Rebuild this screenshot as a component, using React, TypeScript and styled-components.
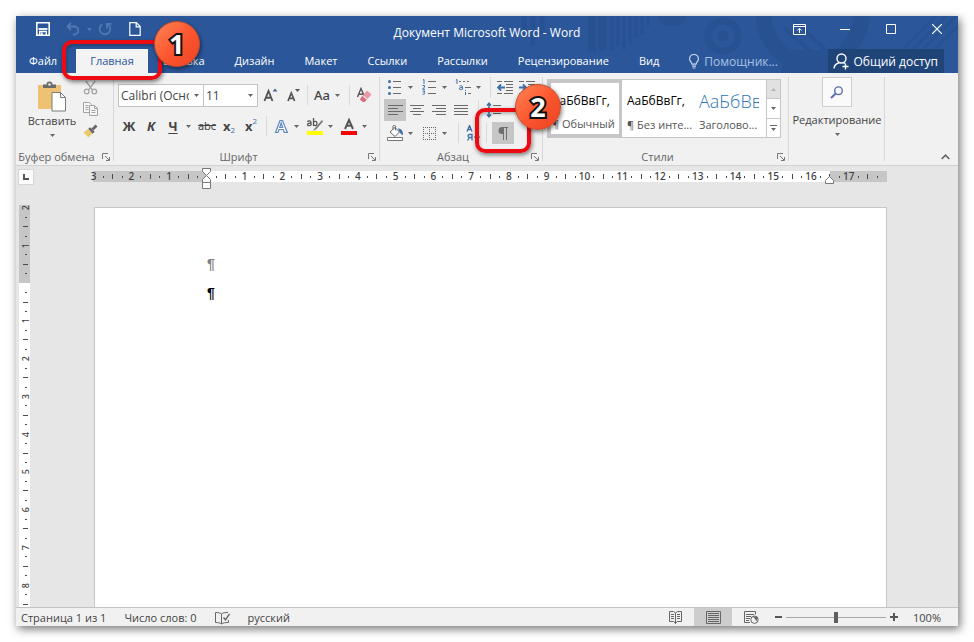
import React from "react";
import type { ReactNode } from "react";
import styled, { createGlobalStyle, css } from "styled-components";

const blue = "#2b579a";
const ink = "#444444";
const iconGrey = "#6a6a6a";
const iconBlue = "#3c6fa8";

const GlobalStyle = createGlobalStyle`
  *, *::before, *::after { box-sizing: border-box; }
  body { margin: 0; background: #ffffff; }
  body, button, input, select { font-family: "Open Sans", "Noto Sans", sans-serif; font-size: 11px; }
  button { border: 0; padding: 0; margin: 0; background: transparent; color: inherit; }
  svg { display: block; flex: none; }
`;

const Desktop = styled.div`
  height: 100vh;
  padding: 16px;
  display: flex;
`;

const Window = styled.div`
  flex: 1;
  min-width: 0;
  display: flex;
  flex-direction: column;
  background: #e6e6e6;
  color: ${ink};
  box-shadow: 2px 3px 9px rgba(0, 0, 0, 0.55);
`;

/* ---------- Header ---------- */

const Header = styled.header`
  position: relative;
  z-index: 2;
  background: ${blue};
  color: #ffffff;
`;

const Decoration = styled.svg`
  position: absolute;
  right: 0;
  top: 0;
`;

const TitleBar = styled.div`
  position: relative;
  display: grid;
  grid-template-columns: 1fr auto 1fr;
  height: 32px;
`;

const QuickAccess = styled.div`
  display: flex;
  align-items: center;
  height: 26px;
  padding-left: 16px;
`;

const QuickButton = styled.button<{ $dim?: boolean; $narrow?: boolean; $gap?: boolean }>`
  width: ${(p) => (p.$narrow ? 10 : 22)}px;
  height: 22px;
  margin-left: ${(p) => (p.$gap ? 8 : 0)}px;
  display: flex;
  align-items: center;
  justify-content: center;
  color: ${(p) => (p.$dim ? "#5078b4" : "#ffffff")};
`;

const WindowTitle = styled.h1`
  margin: 0;
  padding-top: 1px;
  font-size: 12px;
  font-weight: 400;
  line-height: 32px;
  white-space: nowrap;
`;

const WindowControls = styled.div`
  display: flex;
  justify-content: flex-end;
  gap: 4px;
`;

const WindowButton = styled.button`
  width: 42px;
  height: 26px;
  display: flex;
  align-items: center;
  justify-content: center;
`;

const TabBar = styled.nav`
  position: relative;
  display: flex;
  align-items: flex-end;
  height: 25px;
`;

const TabSlot = styled.div<{ $first?: boolean }>`
  position: relative;
  margin-right: ${(p) => (p.$first ? 4 : 0)}px;
`;

const Tab = styled.button<{ $active?: boolean; $first?: boolean }>`
  height: 24px;
  padding: 0 ${(p) => (p.$active ? 14 : 15)}px 0 ${(p) => (p.$first ? 13 : p.$active ? 14 : 15)}px;
  line-height: 24px;
  white-space: nowrap;
  ${(p) =>
    p.$active &&
    css`
      background: #f3f3f3;
      color: ${blue};
    `}
`;

const Assistant = styled.label`
  display: flex;
  align-items: center;
  gap: 4px;
  height: 24px;
  margin-left: 14px;
`;

const AssistantInput = styled.input`
  width: 84px;
  padding: 0;
  border: 0;
  outline: 0;
  background: transparent;
  font-size: 12px;
  color: #ffffff;
  &::placeholder { color: #a9c1e4; opacity: 1; }
`;

const ShareButton = styled.button`
  display: flex;
  align-items: center;
  gap: 3px;
  height: 24px;
  margin: 0 14px 0 auto;
  padding: 0 6px 0 5px;
  background: #1e4478;
  font-size: 12px;
  white-space: nowrap;
`;

/* ---------- Callouts ---------- */

const CalloutFrame = styled.span<{ $side: number; $top: number; $bottom: number }>`
  position: absolute;
  z-index: 3;
  left: -${(p) => p.$side}px;
  right: -${(p) => p.$side}px;
  top: -${(p) => p.$top}px;
  bottom: -${(p) => p.$bottom}px;
  border: 4px solid #ee0a12;
  border-radius: 10px;
  box-shadow: 1px 2px 4px rgba(0, 0, 0, 0.5), inset 1px 2px 3px rgba(0, 0, 0, 0.25);
  pointer-events: none;
`;

const CalloutBadge = styled.span<{ $right: number; $top: number }>`
  position: absolute;
  right: -${(p) => p.$right}px;
  top: -${(p) => p.$top}px;
  width: 46px;
  height: 46px;
  border-radius: 50%;
  border: 1px solid #c4492a;
  background: linear-gradient(135deg, #ff8152 5%, #fc5730 50%, #ee4524 95%);
  box-shadow: 1px 2px 4px rgba(0, 0, 0, 0.5);
  color: #ffffff;
  font: 700 27px/43px "Noto Sans", sans-serif;
  text-align: center;
  -webkit-text-stroke: 4px #111111;
  paint-order: stroke fill;
`;

/* ---------- Ribbon ---------- */

const Ribbon = styled.div`
  display: flex;
  height: 93px;
  background: #f1f1f1;
  border-bottom: 1px solid #d2d2d2;
`;

const Group = styled.section<{ $basis: number }>`
  position: relative;
  flex: 0 0 ${(p) => p.$basis}px;
  display: flex;
  flex-direction: column;
  &::after {
    content: "";
    position: absolute;
    right: 0;
    top: 4px;
    bottom: 4px;
    width: 1px;
    background: #d8d8d8;
  }
`;

const GroupBody = styled.div`
  flex: 1;
  min-height: 0;
  display: flex;
`;

const GroupFooter = styled.div`
  display: flex;
  align-items: center;
  height: 17px;
  color: #666666;
`;

const GroupLabel = styled.span`
  flex: 1;
  text-align: center;
  white-space: nowrap;
`;

const Launcher = styled.button`
  width: 17px;
  height: 16px;
  display: flex;
  align-items: center;
  justify-content: center;
`;

const PasteButton = styled.button`
  display: flex;
  flex-direction: column;
  align-items: center;
  width: 54px;
  height: 60px;
  margin: 8px 0 0 9px;
`;

const PasteLabel = styled.span`
  line-height: 16px;
  margin-bottom: 5px;
`;

const SmallStack = styled.div`
  display: flex;
  flex-direction: column;
  padding-top: 3px;
`;

const ToolRows = styled.div<{ $top: number; $left: number; $gap: number }>`
  display: flex;
  flex-direction: column;
  gap: ${(p) => p.$gap}px;
  padding: ${(p) => p.$top}px 0 0 ${(p) => p.$left}px;
`;

const ToolRow = styled.div`
  display: flex;
  align-items: center;
  height: 22px;
`;

const ToolButton = styled.button<{ $active?: boolean }>`
  width: 22px;
  height: 22px;
  display: flex;
  align-items: center;
  justify-content: center;
  background: ${(p) => (p.$active ? "#c6c6c6" : "transparent")};
`;

const CaretButton = styled.button`
  width: 12px;
  height: 22px;
  padding-right: 3px;
  display: flex;
  align-items: center;
  justify-content: center;
`;

const Letter = styled.span<{ $italic?: boolean; $underline?: boolean; $strike?: boolean; $light?: boolean }>`
  font-family: "Noto Sans", sans-serif;
  font-size: ${(p) => (p.$strike ? 11 : 13)}px;
  line-height: 18px;
  font-weight: ${(p) => (p.$light ? 500 : p.$strike ? 400 : 700)};
  font-style: ${(p) => (p.$italic ? "italic" : "normal")};
  text-decoration: ${(p) => (p.$underline ? "underline" : p.$strike ? "line-through" : "none")};
  text-underline-offset: 2px;
  white-space: nowrap;
`;

const Index = styled.span<{ $up?: boolean }>`
  align-self: ${(p) => (p.$up ? "flex-start" : "flex-end")};
  color: ${iconBlue};
  font-size: 8px;
  line-height: 10px;
  padding: 1px 0 2px;
`;

const Divider = styled.span<{ $before?: number; $after?: number }>`
  width: 1px;
  height: 20px;
  margin: 0 ${(p) => p.$after ?? 3}px 0 ${(p) => p.$before ?? 4}px;
  background: #dadada;
`;

const Field = styled.span<{ $width: number }>`
  position: relative;
  display: flex;
  width: ${(p) => p.$width}px;
  height: 23px;
  margin-right: -1px;
  svg { position: absolute; right: 5px; top: 10px; pointer-events: none; }
`;

const FieldSelect = styled.select`
  appearance: none;
  width: 100%;
  padding: 0 14px 0 2px;
  border: 1px solid #c3c3c3;
  border-radius: 0;
  background: #ffffff;
  color: ${ink};
  font-size: 12px;
  text-overflow: clip;
`;

const PilcrowSlot = styled.span`
  position: relative;
  display: flex;
`;

const FieldGap = styled.span`
  width: 3px;
`;

/* ---------- Styles gallery ---------- */

const Gallery = styled.div`
  flex: 1;
  display: flex;
  height: 59px;
  margin: 6px 8px 0 4px;
  border: 1px solid #c6c6c6;
  background: #ffffff;
`;

const StyleCard = styled.button<{ $active?: boolean }>`
  flex: 1;
  min-width: 0;
  display: flex;
  flex-direction: column;
  padding: ${(p) => (p.$active ? 0 : 3)}px 2px 0 ${(p) => (p.$active ? 1 : 5)}px;
  border: ${(p) => (p.$active ? "3px solid #c6c6c6" : "0")};
  overflow: hidden;
  text-align: left;
  white-space: nowrap;
`;

const StylePreview = styled.span<{ $heading?: boolean }>`
  height: 32px;
  line-height: 36px;
  max-width: 60px;
  overflow: hidden;
  color: ${(p) => (p.$heading ? "#2e74b5" : "#000000")};
  font-size: ${(p) => (p.$heading ? 18 : 12)}px;
  font-weight: ${(p) => (p.$heading ? 300 : 400)};
`;

const StyleName = styled.span`
  font-size: 11px;
  line-height: 20px;
  color: #555555;
`;

const GalleryScroll = styled.div`
  width: 14px;
  display: flex;
  flex-direction: column;
  border-left: 1px solid #c6c6c6;
`;

const ScrollButton = styled.button<{ $disabled?: boolean }>`
  flex: 1;
  display: flex;
  align-items: center;
  justify-content: center;
  background: ${(p) => (p.$disabled ? "#e1e1e1" : "#ffffff")};
  color: ${(p) => (p.$disabled ? "#b5b5b5" : iconGrey)};
  & + & { border-top: 1px solid #c6c6c6; }
`;

const EditingButton = styled.button`
  flex: 1;
  display: flex;
  flex-direction: column;
  align-items: center;
  padding-top: 4px;
  line-height: 26px;
`;

const EditingIcon = styled.span`
  width: 30px;
  height: 30px;
  display: flex;
  align-items: center;
  justify-content: center;
  background: #fafafa;
  border: 1px solid #cfcfcf;
`;

const CollapseButton = styled.button`
  align-self: flex-end;
  margin: 0 6px 1px auto;
  width: 14px;
  height: 14px;
  display: flex;
  align-items: center;
  justify-content: center;
`;

/* ---------- Rulers and page ---------- */

const RulerRow = styled.div`
  display: flex;
  align-items: flex-start;
  height: 39px;
  padding: 3px 71px 0 2px;
`;

const TabSelector = styled.button`
  width: 16px;
  height: 16px;
  margin-right: 59px;
  display: flex;
  align-items: center;
  justify-content: center;
  background: #fdfdfd;
  border: 1px solid #d6d6d6;
`;

const HorizontalRuler = styled.div`
  position: relative;
  flex: 1;
  min-width: 0;
  height: 11px;
  margin-top: 2px;
  background: linear-gradient(to right, #c6c6c6 14.4%, #ffffff 14.4%, #ffffff 92.8%, #c6c6c6 92.8%);
`;

const HorizontalScale = styled.div`
  display: flex;
  align-items: center;
  height: 11px;
  margin: 0 5px 0 -4px;
`;

const VerticalRuler = styled.div`
  width: 11px;
  margin-left: 3px;
  padding-left: 2px;
  display: flex;
  overflow: hidden;
  background: linear-gradient(to bottom, #c6c6c6 78px, #ffffff 78px);
`;

const VerticalScale = styled.div`
  flex: 1;
  display: flex;
  flex-direction: column;
  margin: -2px 0;
`;

const Cell = styled.span`
  flex: 1 1 0;
  min-width: 0;
  min-height: 0;
  display: flex;
  align-items: center;
  justify-content: center;
  font: 500 10px/11px "Noto Sans", sans-serif;
  color: #3c3c3c;
`;

const Mark = styled.i<{ $long?: boolean; $vertical?: boolean }>`
  flex: none;
  width: ${(p) => (p.$vertical ? (p.$long ? 5 : 2) : 1)}px;
  height: ${(p) => (p.$vertical ? 1 : p.$long ? 5 : 2)}px;
  background: #4a4a4a;
`;

const TurnedNumber = styled.span`
  writing-mode: vertical-rl;
  transform: rotate(180deg);
  font-size: 9px;
  line-height: 9px;
`;

const IndentMarker = styled.svg<{ $at: string; $top: number }>`
  position: absolute;
  left: ${(p) => p.$at};
  top: ${(p) => p.$top}px;
  margin-left: -5px;
`;

const Workspace = styled.main`
  flex: 1;
  min-height: 0;
  display: flex;
`;

const Canvas = styled.div`
  flex: 1;
  min-width: 0;
  display: flex;
  padding: 2px 71px 0 64px;
`;

const Page = styled.article`
  flex: 1;
  padding: 46px 112px 0;
  background: #ffffff;
  border: 1px solid #c6c6c6;
  border-bottom: 0;
`;

const Paragraph = styled.p<{ $muted?: boolean }>`
  margin: 0 0 9px;
  color: ${(p) => (p.$muted ? "#7f7f7f" : "#000000")};
  font: 700 14px/20px "Liberation Sans", sans-serif;
`;

/* ---------- Status bar ---------- */

const StatusBar = styled.footer`
  display: flex;
  align-items: center;
  height: 19px;
  padding: 0 17px 0 5px;
  background: #f1f1f1;
  border-top: 1px solid #c3c3c3;
  white-space: nowrap;
`;

const StatusButton = styled.button`
  margin-right: 18px;
  padding-top: 2px;
  line-height: 16px;
`;

const ViewButton = styled.button<{ $active?: boolean }>`
  width: 38px;
  height: 18px;
  display: flex;
  align-items: center;
  justify-content: center;
  background: ${(p) => (p.$active ? "#cdcdcd" : "transparent")};
`;

const Spacer = styled.span`
  flex: 1;
`;

const ZoomButton = styled.button`
  width: 16px;
  height: 18px;
  display: flex;
  align-items: center;
  justify-content: center;
`;

const ZoomSlider = styled.input`
  appearance: none;
  width: 100px;
  height: 11px;
  margin: 0;
  background: linear-gradient(#a8a8a8, #a8a8a8) center / 100% 1px no-repeat;
  &::-webkit-slider-thumb {
    appearance: none;
    width: 4px;
    height: 11px;
    background: #5f5f5f;
  }
`;

const ZoomValue = styled.button`
  margin-left: 11px;
  padding-top: 2px;
  line-height: 16px;
`;

/* ---------- Icons ---------- */

const Caret = () => (
  <svg width="5" height="3" viewBox="0 0 5 3" aria-hidden="true">
    <path d="M0 0h5L2.5 3z" fill="#666" />
  </svg>
);

const Lines = ({ rows }: { rows: [number, number][] }) => (
  <svg width="16" height="16" viewBox="0 0 16 16" aria-hidden="true">
    {rows.map(([x, w], i) => (
      <path key={i} d={`M${x} ${3.5 + i * 3}h${w}`} stroke={iconGrey} />
    ))}
  </svg>
);

const SaveIcon = () => (
  <svg width="14" height="14" viewBox="0 0 14 14" fill="none" stroke="currentColor" aria-hidden="true">
    <path d="M.8.8h12.4v12.4H.8z" strokeWidth="1.6" />
    <path d="M2.500 7h9" strokeWidth="1.8" />
    <path d="M3.700 13V9.500h6.600V13" strokeWidth="1.4" />
    <path d="M5.800 10.500v3" strokeWidth="1.800" />
  </svg>
);
const UndoIcon = () => (
  <svg width="14" height="14" viewBox="0 0 14 14" fill="none" stroke="currentColor" strokeWidth="1.8" aria-hidden="true">
    <path d="M5 1 1.5 4.5 5 8M1.8 4.5h6.4a4 4 0 0 1 0 8H7" />
  </svg>
);
const RedoIcon = () => (
  <svg width="14" height="14" viewBox="0 0 14 14" fill="none" stroke="currentColor" strokeWidth="1.8" aria-hidden="true">
    <path d="M4.3 2.4a5.3 5.3 0 1 0 5.6.2M9 6.5V1.8h4.5" />
  </svg>
);
const NewIcon = () => (
  <svg width="12" height="14" viewBox="0 0 12 14" fill="none" stroke="currentColor" strokeWidth="1.2" aria-hidden="true">
    <path d="M.8.7h6.6l3.8 3.8v8.8H.8zM7.2.8v4h4" />
  </svg>
);
const RibbonOptionsIcon = () => (
  <svg width="13" height="11" viewBox="0 0 13 11" fill="none" stroke="currentColor" aria-hidden="true">
    <path d="M.5.5h12v10H.5zM.5 2.5h12M6.5 9V4.5M4.3 6.5l2.2-2.2 2.2 2.2" />
  </svg>
);
const BulbIcon = () => (
  <svg width="12" height="15" viewBox="0 0 12 15" fill="none" stroke="#c8d8ef" strokeWidth="1.2" aria-hidden="true">
    <path d="M3.9 10.2c0-2-2.3-2.6-2.3-5.3a4.4 4.4 0 0 1 8.8 0c0 2.7-2.3 3.3-2.3 5.3zM4 12.2h4M4.6 14h2.8" />
  </svg>
);
const ShareIcon = () => (
  <svg width="17" height="17" viewBox="0 0 17 17" fill="none" stroke="currentColor" strokeWidth="1.4" aria-hidden="true">
    <circle cx="8.5" cy="5.5" r="4.5" />
    <path d="M1 15.5c.3-3.2 2.4-5 5.2-5.700M10.500 9.500l1.500 1M12.500 10.500v6M9.500 13.500h6" />
  </svg>
);
const LauncherIcon = () => (
  <svg width="8" height="8" viewBox="0 0 8 8" fill="none" stroke="#777" aria-hidden="true">
    <path d="M.5 6V.5H6M3 3l4 4M7.500 4v3.500H4" />
  </svg>
);
const PasteIcon = () => (
  <svg width="30" height="32" viewBox="0 0 30 32" aria-hidden="true">
    <path d="M1 4h23v24H1z" fill="#eec274" />
    <path d="M6 7V3.500h3.500a3 3 0 0 1 6 0H19V7z" fill="#6b6b6b" />
    <circle cx="12.500" cy="3.500" r="1.200" fill="#f1f1f1" />
    <path d="M15 11.500h8.500l5 5V30H15z" fill="#fff" stroke="#7a7a7a" />
    <path d="M23.500 11.500v5h5" fill="none" stroke="#7a7a7a" />
  </svg>
);
const CutIcon = () => (
  <svg width="15" height="15" viewBox="0 0 15 15" fill="none" stroke="#a3a3a3" strokeWidth="1.300" aria-hidden="true">
    <path d="M2.800 1 9.500 10M12.200 1 5.500 10" />
    <circle cx="3.700" cy="11.500" r="2.300" />
    <circle cx="11.300" cy="11.500" r="2.300" />
  </svg>
);
const CopyIcon = () => (
  <svg width="15" height="14" viewBox="0 0 15 14" fill="#f6f6f6" stroke="#a3a3a3" aria-hidden="true">
    <path d="M.5.500h6l2 2v8h-8z" />
    <path d="M2.500 3.500h3M2.500 5.500h3M2.500 7.500h3" />
    <path d="M6.500 3.500h5l3 3v7h-8zM11.500 3.500v3h3M8.500 8.500h4M8.500 10.500h4" />
  </svg>
);
const BrushIcon = () => (
  <svg width="15" height="14" viewBox="0 0 15 14" aria-hidden="true">
    <path d="M5 5 .5 8.500 5.500 13.500 9.500 9.500z" fill="#e8c96a" />
    <path d="m5.200 4.800 2-1.500 4.500 4.500-2 2z" fill="#666" />
    <path d="m8.500 4.500 4-4 2 2-4 4z" fill="#666" />
  </svg>
);
const GrowIcon = ({ shrink }: { shrink?: boolean }) => (
  <svg width="16" height="16" viewBox="0 0 16 16" aria-hidden="true">
    {shrink ? (
      <path d="m3 14 3.300-8 3.300 8M4.200 11.300h4.300" fill="none" stroke="#555" strokeWidth="1.700" />
    ) : (
      <path d="m1.500 14 4-10 4 10M3 10.800h5" fill="none" stroke="#555" strokeWidth="1.900" />
    )}
    <path d={shrink ? "M10 2h5l-2.500 3z" : "M9.500 4.500h5L12 1.500z"} fill={shrink ? "#555" : "#4a6796"} />
  </svg>
);
const EraserIcon = () => (
  <svg width="17" height="17" viewBox="0 0 17 17" aria-hidden="true">
    <path d="M1.500 10 5 1.500 8 8.500M3 7.200h4" fill="none" stroke="#555" strokeWidth="1.400" />
    <path d="m11 3.500 4.500 4-4 4.500-4.500-4z" fill="#e79aa6" />
    <path d="m6.300 8.800 4.500 4-2 2.200h-2l-3-2.600z" fill="#d8707f" />
  </svg>
);
const TextEffectIcon = () => (
  <svg width="15" height="15" viewBox="0 0 15 15" aria-hidden="true">
    <path d="M1.500 13.500 6 1.500h2.500l4.800 12h-3l-1-3H5l-1 3zM5.700 8.500h3L7.200 4z" fill="#fff" stroke="#5f86bd" strokeWidth="1.200" />
  </svg>
);
const HighlightIcon = () => (
  <svg width="18" height="18" viewBox="0 0 18 18" aria-hidden="true">
    <path d="M1 14h16v4H1z" fill="#ffff00" />
    <path d="M5 8.500V5.200C5 3.200 1.800 3.600 1.500 4.800M5 6.200c-2-.2-3.500.3-3.500 1.400 0 1.500 2.800 1.500 3.500-.2M7.500 1v8M7.500 5.500c.8-1.700 3.500-1.500 3.500 1s-2.700 2.600-3.500.8" fill="none" stroke="#555" strokeWidth="1.300" />
    <path d="m16 3-7 8-2 2.500 3-1 7-8z" fill="#777" />
  </svg>
);
const FontColorIcon = () => (
  <svg width="16" height="18" viewBox="0 0 16 18" aria-hidden="true">
    <path d="M0 14h16v4H0z" fill="#f00808" />
    <path d="m4 12 4-9 4 9M5.500 8.800h5" fill="none" stroke="#555" strokeWidth="2" />
  </svg>
);
const BulletsIcon = () => (
  <svg width="14" height="15" viewBox="0 0 14 15" aria-hidden="true">
    {[1.5, 7.5, 13.5].map((y) => (
      <g key={y}>
        <circle cx="1.500" cy={y} r="1.500" fill={iconBlue} />
        <path d={`M5 ${y}h8`} stroke={iconGrey} />
      </g>
    ))}
  </svg>
);
const NumbersIcon = () => (
  <svg width="15" height="16" viewBox="0 0 15 16" fill="none" aria-hidden="true">
    <path d="M1 1l1-.5V5M.5 6.500h2v1.500L.5 10.200h2.500M.5 12h2.300l-1 1.600c2 0 1 2-1.300 1.700" stroke={iconBlue} />
    <path d="M6 2.500h8M6 8.500h8M6 14.500h8" stroke={iconGrey} />
  </svg>
);
const MultiIcon = () => (
  <svg width="17" height="17" viewBox="0 0 17 17" fill="none" aria-hidden="true">
    <path d="M.8 1 2 .5V5M4.500 7c2-.8 3 0 3 1.200v2.300M7.500 8.500c-4-.3-4 2.300-1.800 2.200 1 0 1.800-.8 1.800-1.400M10.500 13v3M10.500 11v1" stroke={iconBlue} />
    <path d="M4 2.500h2M8 2.500h2M12 2.500h2M10 8.500h6M13 14.500h3" stroke={iconGrey} />
  </svg>
);
const IndentIcon = ({ right }: { right?: boolean }) => (
  <svg width="16" height="13" viewBox="0 0 16 13" fill="none" aria-hidden="true">
    <path d="M0 .5h5M7 .5h9M9 3.500h7M9 6.500h7M9 9.500h7M0 12.500h5M7 12.500h9" stroke={iconGrey} />
    <path d={right ? "M0 6.500h7M4 3.500l3 3-3 3" : "M1 6.500h7M4 3.500l-3 3 3 3"} stroke={iconBlue} strokeWidth="1.800" />
  </svg>
);
const SpacingIcon = () => (
  <svg width="15" height="16" viewBox="0 0 15 16" fill="none" aria-hidden="true">
    <path d="M3 1v5M1 3.500 3 1.200l2 2.300M3 10v5M1 12.500l2 2.300 2-2.300" stroke={iconBlue} strokeWidth="1.500" />
    <path d="M7 3.500h8M7 7.500h8M7 11.500h8" stroke={iconGrey} />
  </svg>
);
const ShadingIcon = () => (
  <svg width="17" height="16" viewBox="0 0 17 16" aria-hidden="true">
    <path d="M.5 12.500h15v3H.5z" fill="#fff" stroke="#777" />
    <path d="M3 7 8 2.500l4.500 4.500L8 11.500z" fill="#fff" stroke="#666" />
    <path d="M6 4.500V1.300c0-1.200 2.500-1.200 2.500 0v4" fill="none" stroke="#666" />
    <path d="M11 3.500c3 0 5 2 5 6.500-1.500 0-2-1-3.500-3z" fill={iconBlue} />
  </svg>
);
const BordersIcon = () => (
  <svg width="13" height="13" viewBox="0 0 13 13" fill="none" stroke="#666" strokeDasharray="1 1" aria-hidden="true">
    <path d="M0 .5h13M0 6.500h13M0 12.500h13M.5 0v13M6.500 0v13M12.500 0v13" />
  </svg>
);
const SortIcon = () => (
  <svg width="15" height="16" viewBox="0 0 15 16" fill="none" aria-hidden="true">
    <path d="m1 6.500 2.500-6 2.500 6M2 4.500h3M6 15.500v-6H3.500c-2 0-2 3 0 3H6M3.500 12.500l-2 3" stroke={iconBlue} strokeWidth="1.300" />
    <path d="M11 1v13M8.500 11.500l2.500 3 2.500-3" stroke="#666" strokeWidth="1.300" />
  </svg>
);
const PilcrowIcon = () => (
  <svg width="10" height="13" viewBox="0 0 10 13" aria-hidden="true">
    <path d="M4 0h6v1H9v12H8V1H6v12H5V7H4a3.500 3.500 0 0 1 0-7z" fill="#6e6e6e" />
  </svg>
);
const SearchIcon = () => (
  <svg width="14" height="13" viewBox="0 0 14 13" fill="none" stroke="#5a6fa8" aria-hidden="true">
    <circle cx="8.500" cy="4.700" r="3.800" strokeWidth="1.400" />
    <path d="M5.700 7.500 1 12" strokeWidth="2" />
  </svg>
);
const CollapseIcon = () => (
  <svg width="9" height="6" viewBox="0 0 9 6" fill="none" stroke="#666" strokeWidth="1.700" aria-hidden="true">
    <path d="m.7 5 3.800-3.800L8.300 5" />
  </svg>
);
const ProofIcon = () => (
  <svg width="15" height="13" viewBox="0 0 15 13" fill="none" stroke="#666" aria-hidden="true">
    <path d="M6.500 12V2C5 .7 3 .5.500.500v10c2.500 0 4.500.3 6 1.500C8 10.800 10 10.500 13.500 10.500V8M6.500 2C8 .7 10 .5 13 .5" />
    <path d="m8.500 5.500 2 2.300L14.500 2" strokeWidth="1.400" />
  </svg>
);
const ReadIcon = () => (
  <svg width="13" height="13" viewBox="0 0 13 13" fill="none" stroke="#666" aria-hidden="true">
    <path d="M6.500 2v11M.5.500h4l2 1.500 2-1.500h4v10h-4l-2 1.500-2-1.500h-4zM2 3.500h3M2 5.500h3M2 7.500h3M8 3.500h3M8 5.500h3M8 7.500h3" />
  </svg>
);
const PrintIcon = () => (
  <svg width="15" height="13" viewBox="0 0 15 13" fill="none" stroke="#666" aria-hidden="true">
    <path d="M.5.500h14v12H.5zM2 2.500h11M2 4.500h11M2 6.500h11M2 8.500h11M2 10.500h11" />
  </svg>
);
const WebIcon = () => (
  <svg width="15" height="13" viewBox="0 0 15 13" fill="none" stroke="#666" aria-hidden="true">
    <path d="M6 11.500H.5V.500h11v3M2 3.500h8M2 5.500h5M2 7.500h4M2 9.500h3" />
    <circle cx="10.500" cy="8.700" r="3.700" />
    <path d="M8.500 5.500h4l1.200 2-1.500 3-1-2.500z" fill="#666" stroke="none" />
  </svg>
);

const HeaderDecoration = () => (
  <Decoration width="458" height="57" viewBox="500 16 458 57" fill="none" stroke="#244a88" aria-hidden="true">
    <g opacity="0.45">
      <path d="M524 16v22M533 16v30M542 16v18" strokeWidth="5" />
      <path d="M592 16v36M602 16v34" strokeWidth="8" />
      <path d="M612 16v34M618 16v30M624 16v34M630 16v28M636 16v22M642 16v18M648 16v10" strokeWidth="3" />
      <path d="M658 16a14 10 0 0 0 28 0z" fill="#244a88" />
      <circle cx="723" cy="36" r="15" strokeWidth="7" />
      <circle cx="723" cy="36" r="5" fill="#244a88" />
      <path d="M764 16c0 16 8 30 22 40M862 16c-2 18-12 34-26 44" strokeWidth="16" />
      <path d="m784 28 34 30M794 20l40 38" strokeWidth="4" />
      <path d="m902 50 34-34M912 50l34-34M922 50l34-34M934 50l24-24" strokeWidth="3" />
      <path d="M782 50h48v23h-48z" fill="#244a88" stroke="none" />
    </g>
  </Decoration>
);

/* ---------- Parts ---------- */

type ToolProps = { label: string; active?: boolean; children: ReactNode };

const Tool = ({ label, active, children }: ToolProps) => (
  <ToolButton type="button" aria-label={label} $active={active}>
    {children}
  </ToolButton>
);

const SplitTool = ({ label, children }: ToolProps) => (
  <>
    <Tool label={label}>{children}</Tool>
    <CaretButton type="button" aria-label={`${label}: параметры`}>
      <Caret />
    </CaretButton>
  </>
);

const Footer = ({ label }: { label: string }) => (
  <GroupFooter>
    <GroupLabel>{label}</GroupLabel>
    <Launcher type="button" aria-label={`${label}: дополнительно`}>
      <LauncherIcon />
    </Launcher>
  </GroupFooter>
);

const scale = (from: number, count: number) => Array.from({ length: count }, (_, i) => from + i);

const ScaleCells = ({ from, count, vertical }: { from: number; count: number; vertical?: boolean }) => (
  <>
    {scale(from, count).map((quarter) => {
      const number = Math.abs(quarter / 4);
      let mark: ReactNode = <Mark $vertical={vertical} $long={quarter % 2 === 0} />;
      if (quarter === 0) mark = null;
      else if (quarter % 4 === 0) mark = vertical ? <TurnedNumber>{number}</TurnedNumber> : number;
      return <Cell key={quarter}>{mark}</Cell>;
    })}
  </>
);

const tabs = ["Вставка", "Дизайн", "Макет", "Ссылки", "Рассылки", "Рецензирование", "Вид"];

export default function App() {
  return (
    <Desktop>
      <GlobalStyle />
      <Window>
        <Header>
          <HeaderDecoration />
          <TitleBar>
            <QuickAccess>
              <QuickButton type="button" aria-label="Сохранить"><SaveIcon /></QuickButton>
              <QuickButton type="button" aria-label="Отменить" $dim $gap><UndoIcon /></QuickButton>
              <QuickButton type="button" aria-label="Список отмены" $dim $narrow>
                <svg width="5" height="3" viewBox="0 0 5 3" aria-hidden="true"><path d="M0 0h5L2.500 3z" fill="currentColor" /></svg>
              </QuickButton>
              <QuickButton type="button" aria-label="Повторить" $dim><RedoIcon /></QuickButton>
              <QuickButton type="button" aria-label="Создать" $gap><NewIcon /></QuickButton>
            </QuickAccess>
            <WindowTitle>Документ Microsoft Word - Word</WindowTitle>
            <WindowControls>
              <WindowButton type="button" aria-label="Параметры ленты"><RibbonOptionsIcon /></WindowButton>
              <WindowButton type="button" aria-label="Свернуть">
                <svg width="10" height="11" viewBox="0 0 10 11" aria-hidden="true"><path d="M0 5.500h10" stroke="#fff" /></svg>
              </WindowButton>
              <WindowButton type="button" aria-label="Развернуть">
                <svg width="10" height="10" viewBox="0 0 10 10" aria-hidden="true"><path d="M.5.500h9v9h-9z" fill="none" stroke="#fff" /></svg>
              </WindowButton>
              <WindowButton type="button" aria-label="Закрыть">
                <svg width="10" height="10" viewBox="0 0 10 10" aria-hidden="true"><path d="m0 0 10 10M10 0 0 10" stroke="#fff" strokeWidth="1.200" /></svg>
              </WindowButton>
            </WindowControls>
          </TitleBar>
          <TabBar>
            <TabSlot $first><Tab type="button" $first>Файл</Tab></TabSlot>
            <TabSlot>
              <Tab type="button" $active>Главная</Tab>
              <CalloutFrame $side={14} $top={9} $bottom={7}>
                <CalloutBadge $right={42} $top={23}>1</CalloutBadge>
              </CalloutFrame>
            </TabSlot>
            {tabs.map((name) => (
              <TabSlot key={name}><Tab type="button">{name}</Tab></TabSlot>
            ))}
            <Assistant>
              <BulbIcon />
              <AssistantInput placeholder="Помощник..." aria-label="Помощник" />
            </Assistant>
            <ShareButton type="button"><ShareIcon />Общий доступ</ShareButton>
          </TabBar>
        </Header>

        <Ribbon>
          <Group $basis={98}>
            <GroupBody>
              <PasteButton type="button"><PasteIcon /><PasteLabel>Вставить</PasteLabel><Caret /></PasteButton>
              <SmallStack>
                <Tool label="Вырезать"><CutIcon /></Tool>
                <Tool label="Копировать"><CopyIcon /></Tool>
                <Tool label="Формат по образцу"><BrushIcon /></Tool>
              </SmallStack>
            </GroupBody>
            <Footer label="Буфер обмена" />
          </Group>

          <Group $basis={266}>
            <GroupBody>
              <ToolRows $top={11} $left={4} $gap={9}>
                <ToolRow>
                  <Field $width={86}>
                    <FieldSelect aria-label="Шрифт"><option>Calibri (Основной текст)</option></FieldSelect>
                    <Caret />
                  </Field>
                  <Field $width={55}>
                    <FieldSelect aria-label="Размер шрифта"><option>11</option></FieldSelect>
                    <Caret />
                  </Field>
                  <FieldGap />
                  <Tool label="Увеличить размер"><GrowIcon /></Tool>
                  <Tool label="Уменьшить размер"><GrowIcon shrink /></Tool>
                  <Divider $before={3} />
                  <SplitTool label="Регистр"><Letter $light>Aa</Letter></SplitTool>
                  <Divider />
                  <Tool label="Очистить формат"><EraserIcon /></Tool>
                </ToolRow>
                <ToolRow>
                  <Tool label="Полужирный"><Letter>Ж</Letter></Tool>
                  <Tool label="Курсив"><Letter $italic>К</Letter></Tool>
                  <SplitTool label="Подчеркнутый"><Letter $underline>Ч</Letter></SplitTool>
                  <Tool label="Зачеркнутый"><Letter $strike>abc</Letter></Tool>
                  <Tool label="Подстрочный знак"><Letter>x</Letter><Index>2</Index></Tool>
                  <Tool label="Надстрочный знак"><Letter>x</Letter><Index $up>2</Index></Tool>
                  <Divider />
                  <SplitTool label="Текстовые эффекты"><TextEffectIcon /></SplitTool>
                  <SplitTool label="Цвет выделения"><HighlightIcon /></SplitTool>
                  <SplitTool label="Цвет текста"><FontColorIcon /></SplitTool>
                </ToolRow>
              </ToolRows>
            </GroupBody>
            <Footer label="Шрифт" />
          </Group>

          <Group $basis={163}>
            <GroupBody>
              <ToolRows $top={3} $left={4} $gap={1}>
                <ToolRow>
                  <SplitTool label="Маркеры"><BulletsIcon /></SplitTool>
                  <SplitTool label="Нумерация"><NumbersIcon /></SplitTool>
                  <SplitTool label="Многоуровневый список"><MultiIcon /></SplitTool>
                  <Divider />
                  <Tool label="Уменьшить отступ"><IndentIcon /></Tool>
                  <Tool label="Увеличить отступ"><IndentIcon right /></Tool>
                </ToolRow>
                <ToolRow>
                  <Tool label="По левому краю" active><Lines rows={[[1, 15], [1, 10], [1, 15], [1, 10]]} /></Tool>
                  <Tool label="По центру"><Lines rows={[[1, 14], [4, 8], [1, 14], [4, 8]]} /></Tool>
                  <Tool label="По правому краю"><Lines rows={[[1, 14], [5, 10], [1, 14], [5, 10]]} /></Tool>
                  <Tool label="По ширине"><Lines rows={[[1, 14], [1, 14], [1, 14], [1, 14]]} /></Tool>
                  <Divider $before={6} />
                  <Tool label="Интервал"><SpacingIcon /></Tool>
                </ToolRow>
                <ToolRow>
                  <SplitTool label="Заливка"><ShadingIcon /></SplitTool>
                  <SplitTool label="Границы"><BordersIcon /></SplitTool>
                  <Divider $before={6} />
                  <Tool label="Сортировка"><SortIcon /></Tool>
                  <Divider $before={2} $after={5} />
                  <PilcrowSlot>
                    <Tool label="Отобразить все знаки" active><PilcrowIcon /></Tool>
                    <CalloutFrame $side={17} $top={14} $bottom={9}>
                      <CalloutBadge $right={34} $top={28}>2</CalloutBadge>
                    </CalloutFrame>
                  </PilcrowSlot>
                </ToolRow>
              </ToolRows>
            </GroupBody>
            <Footer label="Абзац" />
          </Group>

          <Group $basis={246}>
            <GroupBody>
              <Gallery>
                <StyleCard type="button" $active>
                  <StylePreview>АаБбВвГг,</StylePreview>
                  <StyleName>¶ Обычный</StyleName>
                </StyleCard>
                <StyleCard type="button">
                  <StylePreview>АаБбВвГг,</StylePreview>
                  <StyleName>¶ Без инте...</StyleName>
                </StyleCard>
                <StyleCard type="button">
                  <StylePreview $heading>АаБбВв</StylePreview>
                  <StyleName>Заголово...</StyleName>
                </StyleCard>
                <GalleryScroll>
                  <ScrollButton type="button" aria-label="Вверх" $disabled>
                    <svg width="5" height="3" viewBox="0 0 5 3" aria-hidden="true"><path d="M0 3h5L2.500 0z" fill="currentColor" /></svg>
                  </ScrollButton>
                  <ScrollButton type="button" aria-label="Вниз"><Caret /></ScrollButton>
                  <ScrollButton type="button" aria-label="Все стили">
                    <svg width="7" height="6" viewBox="0 0 7 6" aria-hidden="true"><path d="M0 0h7v1H0zM1 3h5L3.500 6z" fill="currentColor" /></svg>
                  </ScrollButton>
                </GalleryScroll>
              </Gallery>
            </GroupBody>
            <Footer label="Стили" />
          </Group>

          <Group $basis={96}>
            <EditingButton type="button">
              <EditingIcon><SearchIcon /></EditingIcon>
              <span>Редактирование</span>
              <Caret />
            </EditingButton>
          </Group>
          <CollapseButton type="button" aria-label="Свернуть ленту"><CollapseIcon /></CollapseButton>
        </Ribbon>

        <RulerRow>
          <TabSelector type="button" aria-label="Тип табуляции">
            <svg width="6" height="6" viewBox="0 0 6 6" aria-hidden="true"><path d="M1 0v5h5" fill="none" stroke="#555" strokeWidth="2" /></svg>
          </TabSelector>
          <HorizontalRuler>
            <HorizontalScale><ScaleCells from={-12} count={84} /></HorizontalScale>
            <IndentMarker $at="14.4%" $top={-3} width="10" height="22" viewBox="0 0 10 22" fill="#fff" stroke="#777">
              <path d="M.5.500h8v3l-4 4-4-4zM4.500 7.500l4 4v3h-8v-3zM.5 14.500h8v6h-8z" />
            </IndentMarker>
            <IndentMarker $at="92.8%" $top={5} width="10" height="9" viewBox="0 0 10 9" fill="#fff" stroke="#777">
              <path d="m4.500.500 4 4v3h-8v-3z" />
            </IndentMarker>
          </HorizontalRuler>
        </RulerRow>

        <Workspace>
          <VerticalRuler>
            <VerticalScale><ScaleCells from={-8} count={43} vertical /></VerticalScale>
          </VerticalRuler>
          <Canvas>
            <Page>
              <Paragraph $muted>¶</Paragraph>
              <Paragraph>¶</Paragraph>
            </Page>
          </Canvas>
        </Workspace>

        <StatusBar>
          <StatusButton type="button">Страница 1 из 1</StatusButton>
          <StatusButton type="button">Число слов: 0</StatusButton>
          <StatusButton type="button" aria-label="Правописание"><ProofIcon /></StatusButton>
          <StatusButton type="button">русский</StatusButton>
          <Spacer />
          <ViewButton type="button" aria-label="Режим чтения"><ReadIcon /></ViewButton>
          <ViewButton type="button" aria-label="Разметка страницы" $active><PrintIcon /></ViewButton>
          <ViewButton type="button" aria-label="Веб-документ"><WebIcon /></ViewButton>
          <ZoomButton type="button" aria-label="Уменьшить масштаб">
            <svg width="7" height="8" viewBox="0 0 7 8" aria-hidden="true"><path d="M0 4h7" stroke="#555" strokeWidth="2" /></svg>
          </ZoomButton>
          <ZoomSlider type="range" min="0" max="100" defaultValue="50" aria-label="Масштаб" />
          <ZoomButton type="button" aria-label="Увеличить масштаб">
            <svg width="8" height="8" viewBox="0 0 8 8" aria-hidden="true"><path d="M0 4h8M4 0v8" stroke="#555" strokeWidth="2" /></svg>
          </ZoomButton>
          <ZoomValue type="button">100%</ZoomValue>
        </StatusBar>
      </Window>
    </Desktop>
  );
}
